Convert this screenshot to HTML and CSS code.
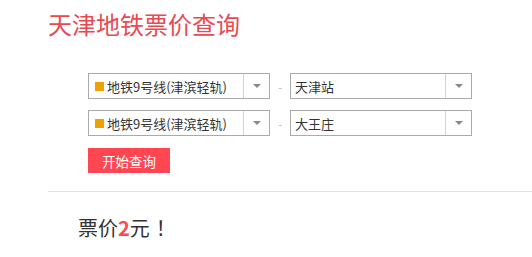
FILE: index.html
```html
<!DOCTYPE html>
<html lang="zh-CN">
<head>
<meta charset="utf-8">
<title>天津地铁票价查询</title>
<link rel="stylesheet" href="styles.css">
</head>
<body>
<h1 class="title">天津地铁票价查询</h1>
<div class="form">
  <div class="row">
    <div class="select line-select">
      <span class="value"><i class="dot"></i>地铁9号线(津滨轻轨)</span>
      <span class="arrow"></span>
    </div>
    <span class="dash">-</span>
    <div class="select station-select">
      <span class="value">天津站</span>
      <span class="arrow"></span>
    </div>
  </div>
  <div class="row">
    <div class="select line-select">
      <span class="value"><i class="dot"></i>地铁9号线(津滨轻轨)</span>
      <span class="arrow"></span>
    </div>
    <span class="dash">-</span>
    <div class="select station-select">
      <span class="value">大王庄</span>
      <span class="arrow"></span>
    </div>
  </div>
  <button class="btn">开始查询</button>
</div>
<div class="divider"></div>
<p class="result">票价<b>2</b>元<span class="excl">！</span></p>
</body>
</html>
```
FILE: styles.css
```css
html, body {
  margin: 0;
  padding: 0;
  background: #fff;
  font-family: "Noto Sans CJK SC", "Noto Sans", sans-serif;
  color: #333;
}
.title {
  margin: 0;
  padding: 8px 0 0 48px;
  font-size: 24px;
  line-height: 32px;
  font-weight: normal;
  color: #e84a52;
}
.form {
  padding: 33px 0 0 88px;
  display: flex;
  flex-direction: column;
  gap: 11px;
}
.row {
  display: flex;
  align-items: center;
}
.select {
  box-sizing: border-box;
  height: 26px;
  border: 1px solid #aaa;
  display: flex;
  align-items: stretch;
  background: #fff;
}
.line-select { width: 182px; }
.station-select { width: 182px; }
.value {
  flex: 1;
  display: flex;
  align-items: center;
  padding-left: 6px;
  font-size: 13px;
  color: #333;
  white-space: nowrap;
}
.station-select .value { padding-left: 4px; }
.dot {
  display: inline-block;
  width: 9px;
  height: 9px;
  background: #f0a000;
  margin-right: 3px;
}
.arrow {
  width: 25px;
  border-left: 1px solid #d4d4d4;
  display: flex;
  align-items: center;
  justify-content: center;
}
.arrow::after {
  content: "";
  width: 0;
  height: 0;
  border-left: 4px solid transparent;
  border-right: 4px solid transparent;
  border-top: 4px solid #888;
}
.dash {
  width: 20px;
  text-align: center;
  color: #bbb;
  font-size: 12px;
}
.btn {
  align-self: flex-start;
  margin-top: 1px;
  width: 82px;
  height: 25px;
  border: 0;
  background: #ff4651;
  color: #fff;
  font-family: inherit;
  font-size: 13.5px;
  padding: 0;
  cursor: pointer;
}
.divider {
  margin: 18px 0 0 48px;
  height: 0;
  border-top: 1px solid #e2e2e2;
}
.result {
  margin: 0;
  padding: 22px 0 0 78px;
  font-size: 20px;
  line-height: 28px;
  color: #333;
}
.result b {
  color: #ff4651;
  font-weight: bold;
}
.excl {
  display: inline-block;
  margin-left: 6px;
}
```
